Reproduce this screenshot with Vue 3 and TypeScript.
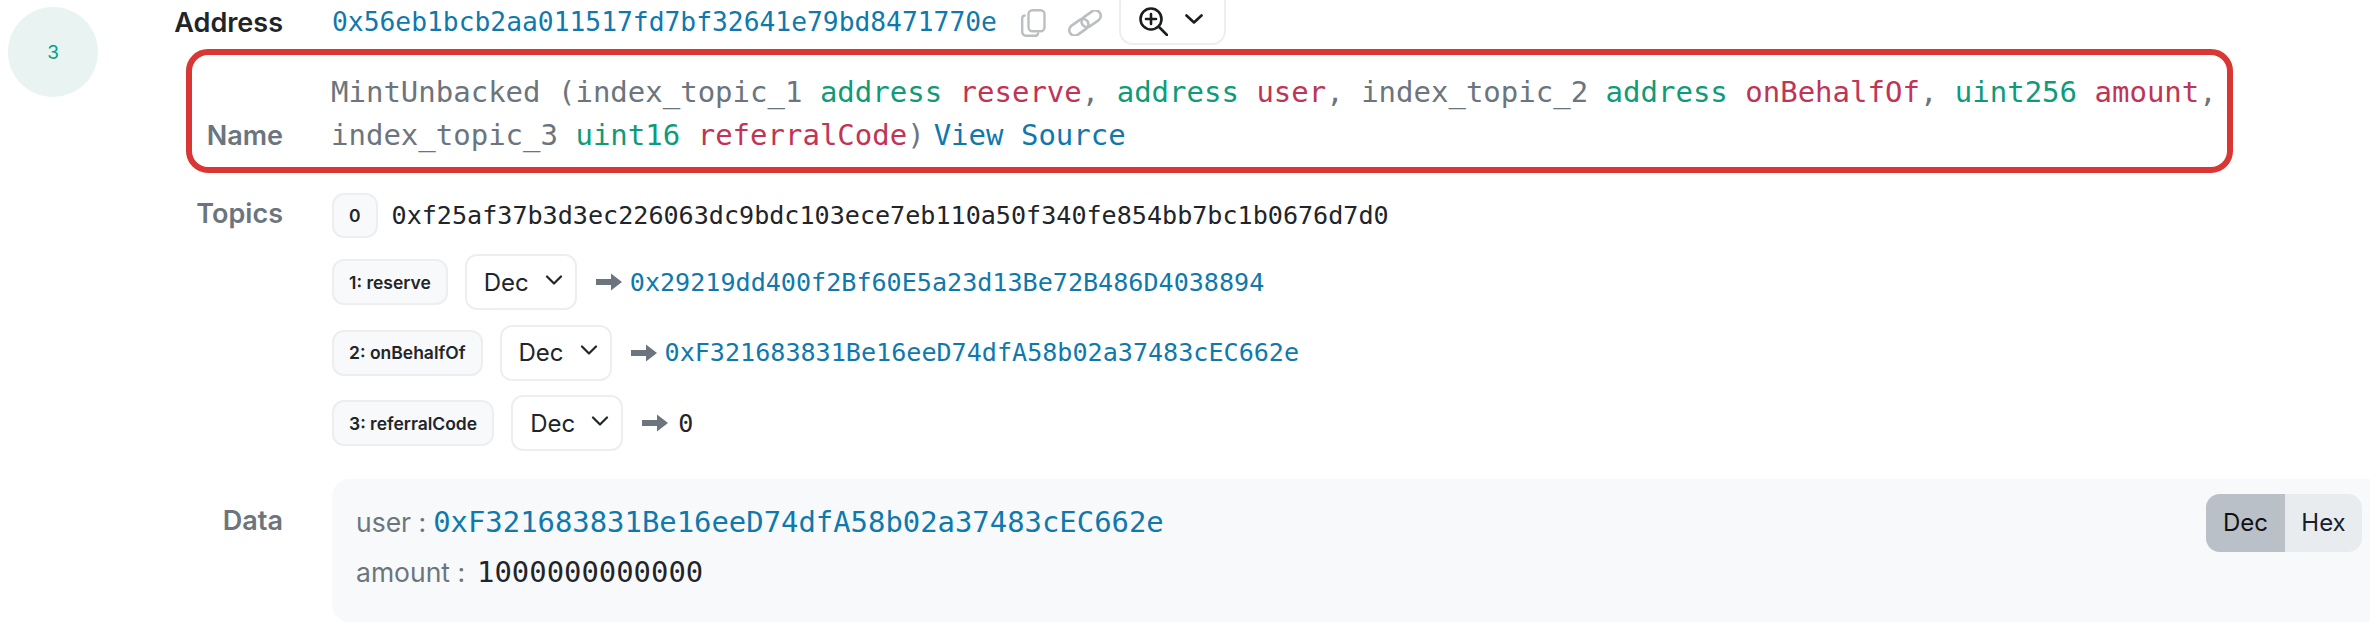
<script setup lang="ts">
interface Topic {
  label: string
  value: string
  link: boolean
}
const topics: Topic[] = [
  { label: '1: reserve', value: '0x29219dd400f2Bf60E5a23d13Be72B486D4038894', link: true },
  { label: '2: onBehalfOf', value: '0xF321683831Be16eeD74dfA58b02a37483cEC662e', link: true },
  { label: '3: referralCode', value: '0', link: false },
]
</script>

<template>
  <div class="page">
    <div class="step">3</div>
    <div class="main">
      <div class="row address-row">
        <div class="label strong">Address</div>
        <div class="value address-value">
          <a class="hash">0x56eb1bcb2aa011517fd7bf32641e79bd8471770e</a>
          <svg class="copy" viewBox="0 0 25 28" fill="none" stroke="#bcbfc2" stroke-width="2.4">
            <rect x="7.5" y="1.2" width="16" height="21" rx="4" />
            <path d="M3.6 6.5 A3 3 0 0 0 1.2 9.5 V23 a3.8 3.8 0 0 0 3.8 3.8 H14 a3 3 0 0 0 3-2.4" stroke-linecap="round" />
          </svg>
          <svg class="chain" viewBox="0 0 34 26" fill="none" stroke="#bcbfc2" stroke-width="2.6">
            <g transform="rotate(-35 17 13)">
              <rect x="-1" y="7.5" width="21" height="11" rx="5.5" />
              <rect x="14" y="7.5" width="21" height="11" rx="5.5" />
            </g>
          </svg>
          <button class="zoom-btn" type="button">
            <svg class="zoom" viewBox="0 0 29 29" fill="none" stroke="#1b1d1f" stroke-width="2.6" stroke-linecap="round">
              <circle cx="12" cy="12" r="10.5" />
              <path d="M12 7 V17 M7 12 H17 M20 20 L28 28" />
            </svg>
            <svg class="zoom-chev" viewBox="0 0 18 10" fill="none" stroke="#1b1d1f" stroke-width="2.6" stroke-linecap="round" stroke-linejoin="round">
              <path d="M1.5 1.5 L9 8.5 L16.5 1.5" />
            </svg>
          </button>
        </div>
      </div>

      <div class="name-box">
        <div class="row name-row">
          <div class="label">Name</div>
          <div class="value sig">
            <div class="sig-line"><span class="gray">MintUnbacked (index_topic_1 </span><span class="green">address</span> <span class="red">reserve</span><span class="gray">, </span><span class="green">address</span> <span class="red">user</span><span class="gray">, index_topic_2 </span><span class="green">address</span> <span class="red">onBehalfOf</span><span class="gray">, </span><span class="green">uint256</span> <span class="red">amount</span><span class="gray">,</span></div>
            <div class="sig-line"><span class="gray">index_topic_3 </span><span class="green">uint16</span> <span class="red">referralCode</span><span class="gray">)</span><a class="source">View Source</a></div>
          </div>
        </div>
      </div>

      <div class="row topics-row">
        <div class="label topics-label">Topics</div>
        <div class="value topics">
          <div class="topic topic-first">
            <span class="badge">0</span>
            <span class="topic-hash">0xf25af37b3d3ec226063dc9bdc103ece7eb110a50f340fe854bb7bc1b0676d7d0</span>
          </div>
          <div v-for="t in topics" :key="t.label" class="topic">
            <span class="badge">{{ t.label }}</span>
            <span class="select">
              Dec
              <svg class="select-chev" viewBox="0 0 18 10" fill="none" stroke="#212529" stroke-width="2.2" stroke-linecap="round" stroke-linejoin="round">
                <path d="M2 1.5 L9 8.5 L16 1.5" />
              </svg>
            </span>
            <svg class="arrow" viewBox="0 0 26 18" fill="#6c757d">
              <path d="M0 6 H15 V0.5 L26 9 L15 17.5 V12 H0 Z" />
            </svg>
            <a v-if="t.link" class="topic-link">{{ t.value }}</a>
            <span v-else class="topic-plain">{{ t.value }}</span>
          </div>
        </div>
      </div>

      <div class="row data-row">
        <div class="label data-label">Data</div>
        <div class="data-box">
          <div class="data-lines">
            <div class="data-line">
              <span class="key">user :</span>
              <a class="data-val link">0xF321683831Be16eeD74dfA58b02a37483cEC662e</a>
            </div>
            <div class="data-line">
              <span class="key key-wide">amount :</span>
              <span class="data-val">1000000000000</span>
            </div>
          </div>
          <div class="toggle">
            <span class="tog on">Dec</span>
            <span class="tog">Hex</span>
          </div>
        </div>
      </div>
    </div>
  </div>
</template>

<style>
html, body { background: #fff; }
</style>

<style scoped>
.page {
  width: 2370px;
  height: 642px;
  overflow: hidden;
  display: flex;
  align-items: flex-start;
  box-sizing: border-box;
  padding-left: 8px;
  font-family: Inter, "Liberation Sans", sans-serif;
  color: #212529;
}
.step {
  flex: none;
  width: 90px;
  height: 90px;
  margin-top: 7px;
  margin-right: 88px;
  border-radius: 50%;
  background: #e9f3f1;
  color: #00a186;
  font-size: 19px;
  display: flex;
  align-items: center;
  justify-content: center;
}
.main {
  flex: 1;
  min-width: 0;
}
.row {
  display: grid;
  grid-template-columns: 97px 1fr;
  column-gap: 49px;
}
.label {
  display: flex;
  justify-content: flex-end;
  font-size: 27px;
  font-weight: 600;
  color: #6c757d;
  white-space: nowrap;
}
.strong { color: #212529; }
.address-row {
  height: 49px;
  align-items: center;
}
.address-row .label { margin-top: -5px; }
.address-value {
  display: flex;
  align-items: center;
  margin-top: -5px;
}
.hash {
  font-family: "DejaVu Sans Mono", monospace;
  font-size: 26.3px;
  color: #0f79ad;
  white-space: nowrap;
}
.copy { width: 25px; height: 28px; margin-left: 24px; flex: none; margin-top: 2px; }
.chain { width: 34px; height: 26px; margin-left: 22px; flex: none; margin-top: 2px; }
.zoom-btn {
  width: 107px;
  height: 56px;
  margin-left: 17px;
  margin-top: -10px;
  flex: none;
  box-sizing: border-box;
  background: #fff;
  border: 2px solid #eceef0;
  border-radius: 14px;
  padding: 0 0 0 18px;
  display: flex;
  align-items: center;
}
.zoom { width: 29px; height: 29px; margin-top: 8px; }
.zoom-chev { width: 18px; height: 10px; margin-left: 17px; margin-top: 4px; }
.name-box {
  width: 2047px;
  height: 124px;
  box-sizing: border-box;
  border: 6px solid #d93634;
  border-radius: 22px;
}
.name-row {
  height: 100%;
  margin-left: -6px;
  align-items: end;
  padding-bottom: 10px;
  box-sizing: border-box;
}
.name-row .label { line-height: 43px; }
.sig {
  font-family: "DejaVu Sans Mono", monospace;
  font-size: 29px;
  line-height: 43px;
  margin-left: -1px;
}
.sig-line { white-space: nowrap; }
.gray { color: #6c757d; white-space: pre; }
.green { color: #0f9b78; }
.red { color: #c03555; }
.source { color: #0f79ad; margin-left: 9px; }
.topics-row {
  margin-top: 20px;
}
.topics-label {
  margin-top: 2px;
  line-height: 38px;
}
.topics {
  display: flex;
  flex-direction: column;
}
.topic {
  display: flex;
  align-items: center;
  height: 56px;
  margin-bottom: 14.5px;
}
.topic-first {
  height: 45px;
  margin-bottom: 16px;
}
.badge {
  box-sizing: border-box;
  height: 46px;
  display: flex;
  align-items: center;
  padding: 0 15px;
  font-size: 17.5px;
  font-weight: 600;
  background: #f8f9fa;
  border: 2px solid #eceef0;
  border-radius: 12px;
  white-space: nowrap;
}
.topic-first .badge { height: 45px; }
.topic-hash {
  font-family: "DejaVu Sans Mono", monospace;
  font-size: 25.1px;
  margin-left: 14px;
}
.select {
  box-sizing: border-box;
  width: 112px;
  height: 56px;
  margin-left: 17px;
  padding-left: 17px;
  display: flex;
  align-items: center;
  border: 2px solid #eceef0;
  border-radius: 12px;
  font-size: 24px;
  background: #fff;
}
.select-chev { width: 18px; height: 10px; margin-left: 16px; margin-top: -5px; }
.arrow { width: 26px; height: 18px; margin-left: 19px; flex: none; }
.topic-link,
.topic-plain {
  font-family: "DejaVu Sans Mono", monospace;
  font-size: 25.1px;
  margin-left: 8px;
}
.topic-link { color: #0f79ad; }
.topic-plain { margin-left: 10px; }
.data-row {
  margin-top: 13px;
}
.data-label {
  margin-top: 22px;
  line-height: 40px;
}
.data-box {
  height: 143px;
  box-sizing: border-box;
  background: #f8f9fa;
  border-radius: 18px 0 0 18px;
  padding: 18px 8px 0 24px;
  display: flex;
  justify-content: space-between;
  align-items: flex-start;
}
.data-line {
  display: flex;
  align-items: center;
  height: 50px;
}
.key {
  font-size: 26.5px;
  color: #6c757d;
  margin-right: 7px;
  white-space: nowrap;
}
.key-wide { margin-right: 12px; }
.data-val {
  font-family: "DejaVu Sans Mono", monospace;
  font-size: 28.9px;
}
.link { color: #0f79ad; }
.toggle {
  display: flex;
  height: 58px;
  width: 156px;
  margin-top: -3px;
  border-radius: 14px;
  overflow: hidden;
  background: #e9ecef;
}
.tog {
  width: 77px;
  display: flex;
  align-items: center;
  justify-content: center;
  font-size: 24px;
  color: #18202f;
}
.tog.on {
  width: 79px;
  background: #b9c0c8;
  color: #111;
}
</style>
